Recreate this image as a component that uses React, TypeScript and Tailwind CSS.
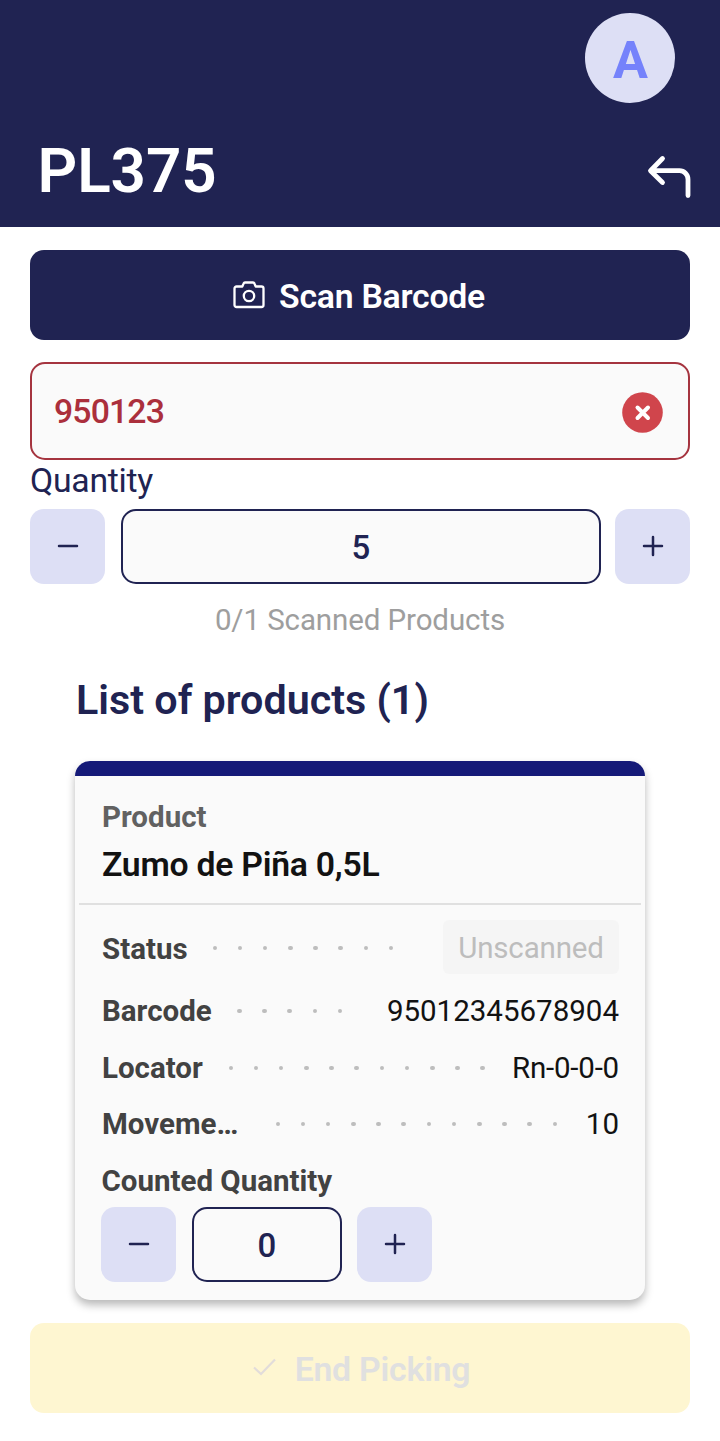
import React from "react";

function Minus() {
  return (
    <svg className="mb-[1px]" width="22" height="22" viewBox="0 0 22 22" fill="none" stroke="#202352" strokeWidth="2.5" strokeLinecap="round">
      <path d="M2 11h18" />
    </svg>
  );
}

function Plus() {
  return (
    <svg className="mb-[1px]" width="22" height="22" viewBox="0 0 22 22" fill="none" stroke="#202352" strokeWidth="2.5" strokeLinecap="round">
      <path d="M2 11h18M11 2v18" />
    </svg>
  );
}

function StepButton({ label, children }: { label: string; children: React.ReactNode }) {
  return (
    <button aria-label={label} className="flex h-full w-[75px] shrink-0 items-center justify-center rounded-[14px] bg-[#dddff5]">
      {children}
    </button>
  );
}

function Row({ label, labelClass, dots, className, children }: {
  label: string;
  labelClass: string;
  dots: number;
  className: string;
  children: React.ReactNode;
}) {
  return (
    <div className={`flex items-center ${className}`}>
      <span className={`shrink-0 whitespace-nowrap font-bold text-[#424242] ${labelClass}`}>{label}</span>
      <div className="flex gap-[20.6px]">
        {Array.from({ length: dots }, (_, i) => (
          <span key={i} className="size-[4.6px] shrink-0 rounded-full bg-[#bdbdbd]" />
        ))}
      </div>
      <span className="ml-auto">{children}</span>
    </div>
  );
}

export default function App() {
  return (
    <div className="flex h-[1441px] w-[720px] flex-col bg-white font-['Roboto',sans-serif] text-[29.5px] text-[#121212]">
      <header className="flex h-[226.5px] shrink-0 flex-col bg-[#202352] pt-[13px]">
        <div className="mr-[45px] flex size-[90px] shrink-0 items-center justify-center self-end rounded-full bg-[#dddff5] pt-[6px] pl-[1px] text-[52px] font-bold leading-none text-[#7582fb]">
          A
        </div>
        <div className="mt-[27px] flex h-[80px] items-center justify-between pr-[28px] pl-[37.5px]">
          <h1 className="pt-[1px] text-[62px] font-semibold leading-none tracking-[-0.1px] text-white">PL375</h1>
          <svg className="mt-[13px]" width="46" height="46" viewBox="0 0 46 46" fill="none" stroke="#fff" strokeWidth="4.8" strokeLinecap="round" strokeLinejoin="round">
            <path d="M16.5 4.5 4.5 16.7l12 11.8M5 16.7h28.5c4.7 0 8.5 3.8 8.5 8.5V41.500" />
          </svg>
        </div>
      </header>

      <main className="flex flex-col px-[30px] pt-[23.5px]">
        <button className="flex h-[90px] items-center justify-center rounded-[14px] bg-[#202352] pr-[2px] text-[33.75px] font-semibold tracking-[-0.25px] text-white">
          <svg className="mr-[14px]" width="32" height="28" viewBox="0 0 32 28" fill="none" stroke="#fff" strokeWidth="2.3" strokeLinejoin="round">
            <path d="M3.5 5.5h5.8l1.3-3a1.5 1.5 0 0 1 1.4-1h8a1.5 1.5 0 0 1 1.4 1l1.3 3h5.8A2 2 0 0 1 30.5 7.5v16.5a2 2 0 0 1-2 2h-25a2 2 0 0 1-2-2V7.5a2 2 0 0 1 2-2Z" />
            <circle cx="16" cy="15" r="5.2" />
          </svg>
          <span className="pt-[5px]">Scan Barcode</span>
        </button>

        <div className="mt-[22px] flex h-[98px] items-center justify-between rounded-[15px] border-2 border-[#a5343f] bg-[#fafafa] pr-[25px] pl-[22px]">
          <span className="pt-[3px] text-[33.75px] font-medium tracking-[-0.85px] text-[#ab2f3c]">950123</span>
          <svg className="mt-[3px]" width="41" height="41" viewBox="0 0 41 41">
            <circle cx="20.5" cy="20.5" r="20.3" fill="#d0454c" />
            <path d="m15.500 15.500 10.500 10.500M26 15.500 15.500 26" stroke="#fff" strokeWidth="4" strokeLinecap="round" />
          </svg>
        </div>

        <div className="flex h-[49px] items-center pb-[8px] text-[33.75px] leading-none tracking-[-0.25px] text-[#202352]">Quantity</div>
        <div className="flex h-[74.5px] justify-between">
          <StepButton label="Decrease"><Minus /></StepButton>
          <div className="ml-px flex w-[480px] items-center justify-center rounded-[15px] border-2 border-[#202352] bg-[#fafafa] pt-[3px] pl-[1px] text-[33px] font-medium text-[#202352]">5</div>
          <StepButton label="Increase"><Plus /></StepButton>
        </div>
        <p className="mt-[16.5px] text-center leading-[40px] tracking-[-0.1px] text-[#9e9e9e]">0/1 Scanned Products</p>

        <h2 className="mt-[35px] ml-[46px] text-[41.25px] font-semibold leading-[50px] text-[#202352]">List of products (1)</h2>

        <section className="mx-[45px] mt-[36px] h-[539px] overflow-hidden rounded-[15px] bg-[#fafafa] shadow-[0_5px_8px_rgba(0,0,0,0.28)]">
          <div className="h-[15px] bg-[#151a78]" />
          <div className="mx-[4px] h-[129px] border-b-2 border-[#e0e0e0] pt-[21px] pl-[23px]">
            <p className="font-bold leading-[40px] text-[#616161]">Product</p>
            <p className="mt-[8px] text-[33.75px] font-semibold leading-[40px] tracking-[-0.25px]">Zumo de Piña 0,5L</p>
          </div>
          <div className="flex flex-col pr-[26px] pl-[27px]">
            <Row label="Status" labelClass="w-[110.5px] pt-[2px]" dots={8} className="mt-[15px] h-[56px]">
              <span className="mb-[2px] flex h-[54px] w-[176px] items-center justify-center rounded-[6px] bg-[#f5f5f5] pt-[2px] tracking-[-0.15px] text-[#bdbdbd]">Unscanned</span>
            </Row>
            <Row label="Barcode" labelClass="w-[135px]" dots={5} className="mt-[6px] h-[58px]">95012345678904</Row>
            <Row label="Locator" labelClass="w-[126.5px]" dots={11} className="h-[56px]"><span className="tracking-[-0.2px]">Rn-0-0-0</span></Row>
            <Row label="Moveme…" labelClass="w-[173.5px]" dots={12} className="h-[56px]">10</Row>
            <p className="mt-[9px] -ml-[0.5px] leading-[40px] font-bold text-[#424242]">Counted Quantity</p>
            <div className="mt-[6px] -ml-px flex h-[75px]">
              <StepButton label="Decrease count"><Minus /></StepButton>
              <div className="mr-[15px] ml-[16px] flex w-[150px] items-center justify-center rounded-[15px] border-2 border-[#202352] pt-[3px] text-[33px] font-medium text-[#202352]">0</div>
              <StepButton label="Increase count"><Plus /></StepButton>
            </div>
          </div>
        </section>

        <button className="mt-[23px] flex h-[90px] items-center justify-center rounded-[14px] bg-[#fef6d1] pt-[4px] pl-[3px] text-[33.75px] font-semibold tracking-[-0.2px] text-[#e0e0e0]">
          <svg className="mr-[19px] mb-[6px]" width="23" height="18" viewBox="0 0 23 18" fill="none" stroke="#e2dcda" strokeWidth="2.2">
            <path d="m1 9.5 7 6.500L22 1.500" />
          </svg>
          End Picking
        </button>
      </main>
    </div>
  );
}
